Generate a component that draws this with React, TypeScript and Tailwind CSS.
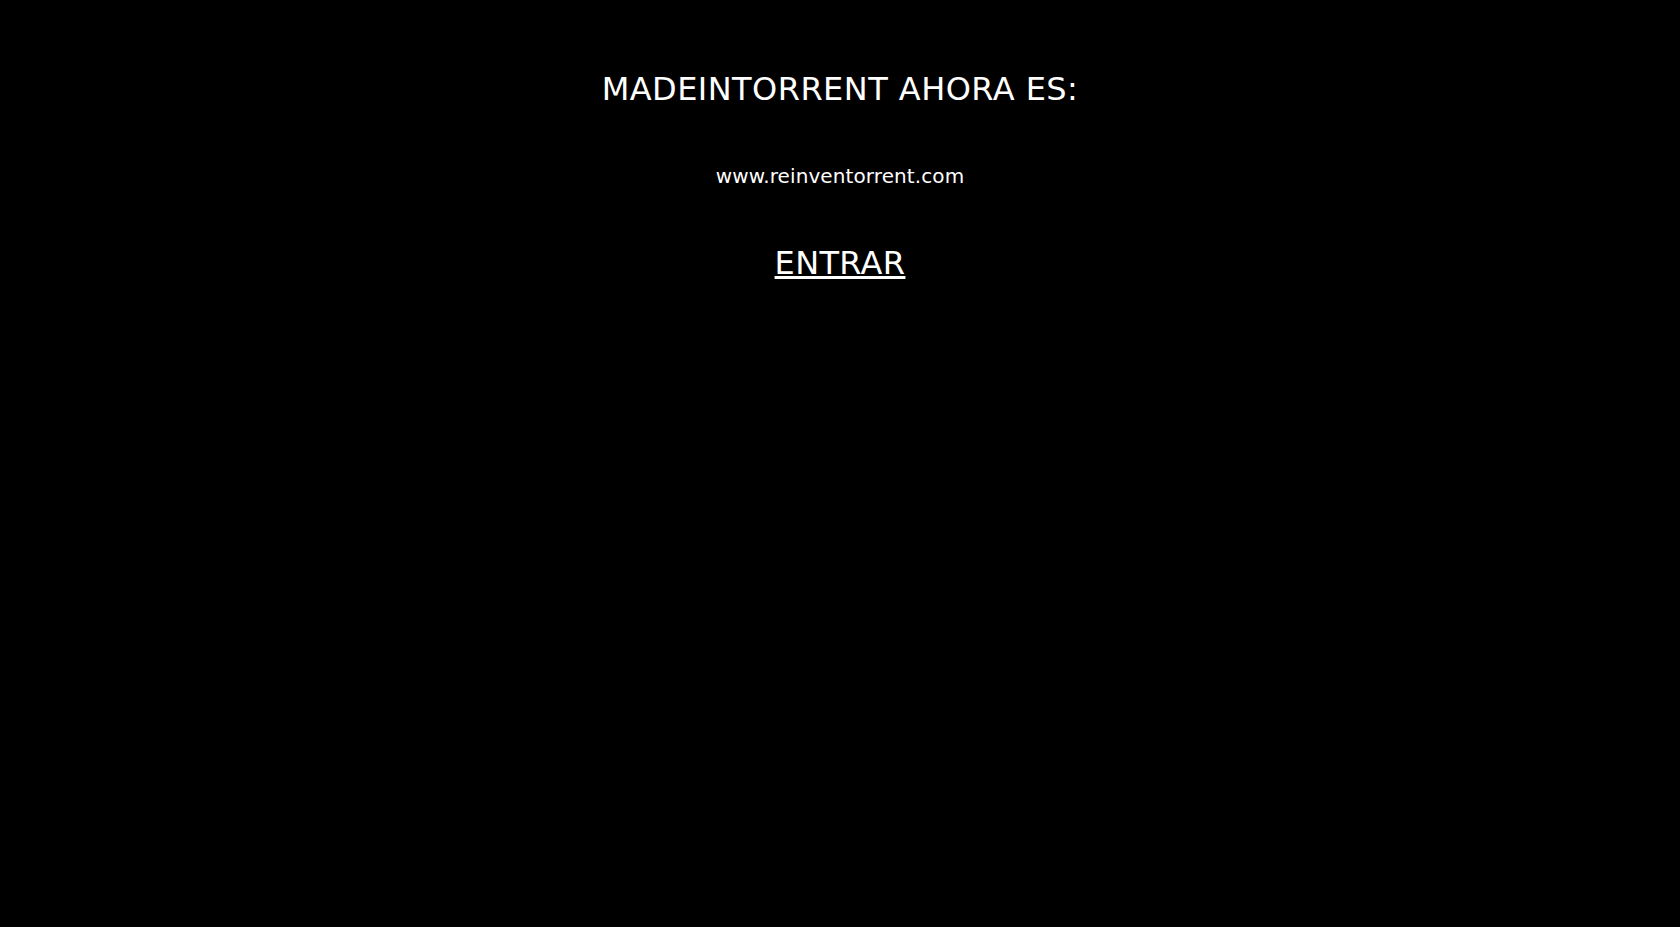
export default function App() {
  return (
    <div
      className="min-h-screen w-full bg-black text-white text-center"
      style={{ fontFamily: '"DejaVu Sans", Verdana, sans-serif' }}
    >
      <div className="pt-[71px] flex flex-col items-center">
        <div className="text-[32px] leading-[37px] tracking-[0.45px]">MADEINTORRENT AHORA ES:</div>
        <div className="mt-[57px] text-[20px] leading-[23px] tracking-[0.1px]">www.reinventorrent.com</div>
        <a href="#" className="mt-[57px] text-[32px] leading-[37px] tracking-[0.35px] underline text-white">
          ENTRAR
        </a>
      </div>
    </div>
  );
}
